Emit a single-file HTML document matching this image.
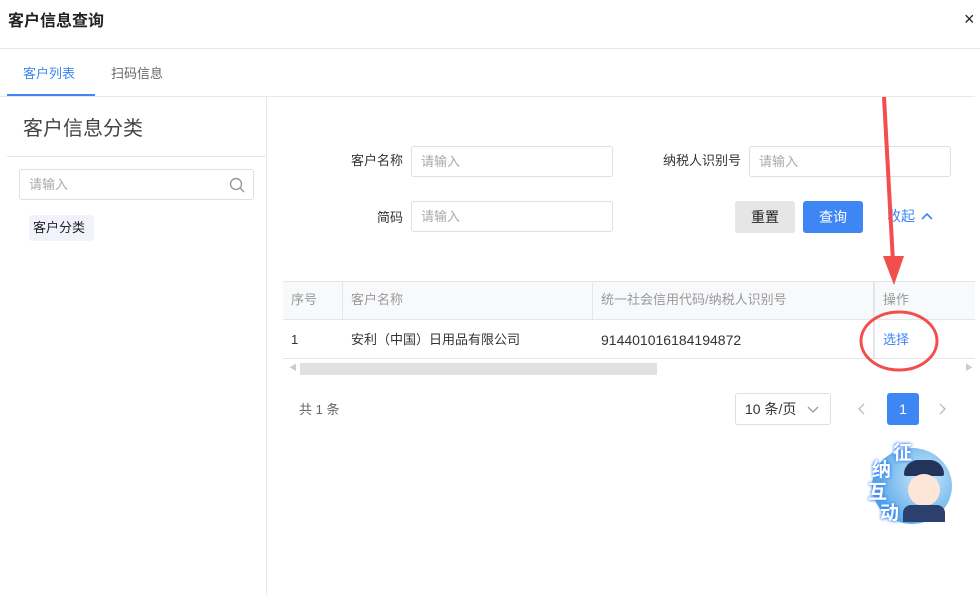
<!DOCTYPE html>
<html><head><meta charset="utf-8"><style>
*{margin:0;padding:0;box-sizing:border-box}
body{width:980px;height:595px;background:#fff;font-family:"Liberation Sans","Noto Sans CJK SC",sans-serif;position:relative;overflow:hidden;color:#333}
.a{position:absolute;line-height:1.2}
.inp{position:absolute;border:1px solid #dcdfe6;border-radius:3px;height:31px;font-size:13px;color:#aaa;padding:0 9px;line-height:29px}
.lbl{position:absolute;font-size:13px;color:#333;text-align:right;line-height:16px}
.th{position:absolute;font-size:13px;color:#999;top:292px;line-height:16px}
.td{position:absolute;font-size:13px;color:#333;top:331px;line-height:18px}
</style></head><body>
<div class="a" style="left:8px;top:12px;font-size:16px;color:#222;font-weight:bold">客户信息查询</div>
<div class="a" style="left:964px;top:9px;font-size:18px;color:#222">×</div>
<div class="a" style="left:0;top:48px;width:980px;height:1px;background:#e8e8e8"></div>
<div class="a" style="left:23px;top:66px;font-size:13px;color:#3d86f4">客户列表</div>
<div class="a" style="left:111px;top:66px;font-size:13px;color:#666">扫码信息</div>
<div class="a" style="left:0;top:96px;width:975px;height:1px;background:#e8e8e8"></div>
<div class="a" style="left:7px;top:94px;width:88px;height:2px;background:#3d86f4"></div>
<div class="a" style="left:266px;top:97px;width:1px;height:498px;background:#e8e8e8"></div>
<div class="a" style="left:23px;top:117px;font-size:20px;color:#444">客户信息分类</div>
<div class="a" style="left:7px;top:156px;width:259px;height:1px;background:#e8e8e8"></div>
<div class="inp" style="left:19px;top:169px;width:235px">请输入</div>
<svg class="a" style="left:229px;top:177px" width="16" height="16"><circle cx="7" cy="7" r="5.5" fill="none" stroke="#999" stroke-width="1.4"/><path d="M11 11l4 4" stroke="#999" stroke-width="1.4"/></svg>
<div class="a" style="left:29px;top:215px;width:65px;height:26px;background:#f1f2fb;border-radius:3px;font-size:13px;color:#222;padding:0 4px;line-height:26px">客户分类</div>

<div class="lbl" style="left:330px;top:153px;width:73px">客户名称</div>
<div class="inp" style="left:411px;top:146px;width:202px">请输入</div>
<div class="lbl" style="left:640px;top:153px;width:101px">纳税人识别号</div>
<div class="inp" style="left:749px;top:146px;width:202px">请输入</div>
<div class="lbl" style="left:330px;top:210px;width:73px">简码</div>
<div class="inp" style="left:411px;top:201px;width:202px">请输入</div>
<div class="a" style="left:735px;top:201px;width:60px;height:32px;background:#e6e6e6;border-radius:3px;font-size:14px;color:#222;text-align:center;line-height:32px">重置</div>
<div class="a" style="left:803px;top:201px;width:60px;height:32px;background:#3d86f4;border-radius:3px;font-size:14px;color:#fff;text-align:center;line-height:32px">查询</div>
<div class="a" style="left:887px;top:208px;font-size:14px;color:#3d86f4">收起</div>
<svg class="a" style="left:920px;top:211px" width="14" height="10"><path d="M2 8l5-5 5 5" fill="none" stroke="#3d86f4" stroke-width="1.6"/></svg>

<div class="a" style="left:283px;top:281px;width:692px;height:39px;background:#f8f9fb;border-top:1px solid #e4e6eb;border-bottom:1px solid #e4e6eb"></div>
<div class="a" style="left:283px;top:358px;width:692px;height:1px;background:#e4e6eb"></div>
<div class="a" style="left:342px;top:281px;width:1px;height:39px;background:#e4e6eb"></div>
<div class="a" style="left:592px;top:281px;width:1px;height:39px;background:#e4e6eb"></div>
<div class="a" style="left:873px;top:281px;width:2px;height:78px;background:#e4e6eb"></div>
<div class="th" style="left:291px">序号</div>
<div class="th" style="left:351px">客户名称</div>
<div class="th" style="left:601px">统一社会信用代码/纳税人识别号</div>
<div class="th" style="left:883px">操作</div>
<div class="td" style="left:291px">1</div>
<div class="td" style="left:351px">安利（中国）日用品有限公司</div>
<div class="td" style="left:601px;font-size:14px">914401016184194872</div>
<div class="td" style="left:883px;color:#3d86f4">选择</div>
<div class="a" style="left:300px;top:363px;width:357px;height:12px;background:#e1e1e1"></div>
<div class="a" style="left:289px;top:363px;font-size:8px;color:#ccc">◀</div>
<div class="a" style="left:965px;top:363px;font-size:8px;color:#ccc">▶</div>

<div class="a" style="left:299px;top:402px;font-size:13px;color:#666">共 1 条</div>
<div class="a" style="left:735px;top:393px;width:96px;height:32px;border:1px solid #dcdfe6;border-radius:3px;font-size:14px;color:#333;padding:0 9px;line-height:30px">10 条/页</div>
<svg class="a" style="left:807px;top:404px" width="12" height="10"><path d="M1 3l5 5 5-5" fill="none" stroke="#999" stroke-width="1.3"/></svg>
<svg class="a" style="left:857px;top:402px" width="10" height="14"><path d="M7 2l-5 5 5 5" fill="none" stroke="#bbb" stroke-width="1.3"/></svg>
<div class="a" style="left:887px;top:393px;width:32px;height:32px;background:#3d86f4;border-radius:3px;color:#fff;font-size:14px;text-align:center;line-height:32px">1</div>
<svg class="a" style="left:937px;top:402px" width="10" height="14"><path d="M3 2l5 5-5 5" fill="none" stroke="#bbb" stroke-width="1.3"/></svg>

<svg class="a" style="left:0;top:0" width="980" height="595">
<path d="M884 97 L893 262" stroke="#f24e4e" stroke-width="4" fill="none"/>
<path d="M883 256 L904 256 L894 285 Z" fill="#f24e4e"/>
<ellipse cx="899" cy="341" rx="38" ry="29" fill="none" stroke="#f24e4e" stroke-width="3"/>
</svg>

<div class="a" style="left:872px;top:448px;width:80px;height:76px;border-radius:50%;background:radial-gradient(circle at 65% 40%,#cfeafc,#2a8fe0);"></div>
<div class="a" style="left:904px;top:460px;width:40px;height:16px;background:#23345a;border-radius:14px 14px 2px 2px"></div>
<div class="a" style="left:908px;top:474px;width:32px;height:32px;background:#fde6d8;border-radius:50%"></div>
<div class="a" style="left:903px;top:505px;width:42px;height:17px;background:#2c4070;border-radius:8px 8px 0 0"></div>
<div class="a" style="left:893px;top:443px;font-size:19px;font-weight:bold;color:#fff;text-shadow:0 0 3px #3d86f4,0 0 3px #3d86f4">征</div>
<div class="a" style="left:872px;top:460px;font-size:19px;font-weight:bold;color:#fff;text-shadow:0 0 3px #3d86f4,0 0 3px #3d86f4">纳</div>
<div class="a" style="left:868px;top:482px;font-size:19px;font-weight:bold;color:#fff;text-shadow:0 0 3px #3d86f4,0 0 3px #3d86f4">互</div>
<div class="a" style="left:880px;top:503px;font-size:19px;font-weight:bold;color:#fff;text-shadow:0 0 3px #3d86f4,0 0 3px #3d86f4">动</div>
</body></html>
